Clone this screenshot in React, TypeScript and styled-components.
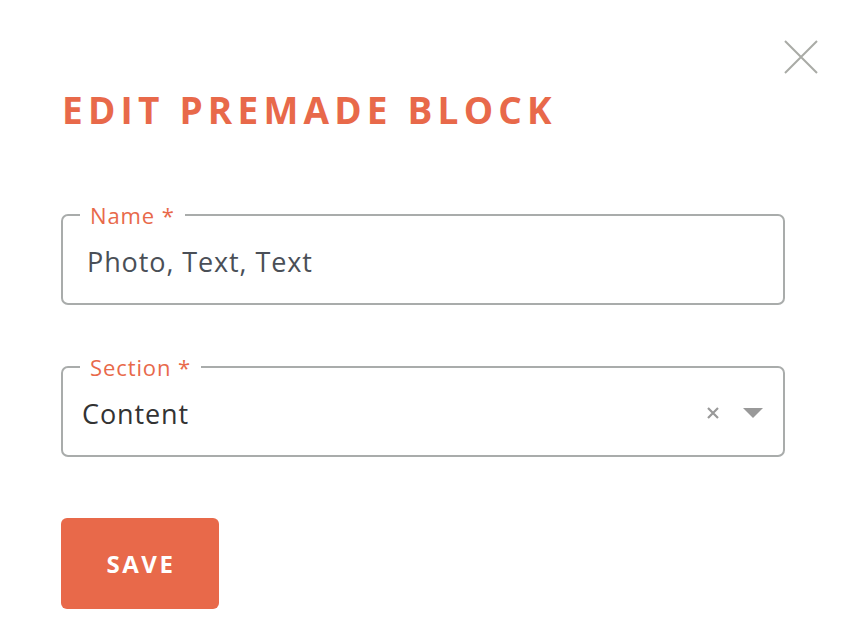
import React from 'react';
import styled, { createGlobalStyle } from 'styled-components';

const GlobalStyle = createGlobalStyle`
  html, body {
    margin: 0;
    padding: 0;
    background: #fff;
    font-family: 'Open Sans', 'Liberation Sans', sans-serif;
  }
`;

const Dialog = styled.div`
  position: relative;
  width: 854px;
  height: 638px;
  box-sizing: border-box;
  padding: 88px 69px 0 61px;
  background: #fff;
`;

const CloseButton = styled.button`
  position: absolute;
  top: 40px;
  right: 36px;
  width: 34px;
  height: 34px;
  padding: 0;
  border: none;
  background: none;
  cursor: pointer;
`;

const Title = styled.h2`
  margin: 0 0 0 1px;
  font-size: 37px;
  line-height: 44px;
  font-weight: 700;
  letter-spacing: 5.2px;
  color: #e8694a;
  text-transform: uppercase;
`;

const Form = styled.form`
  display: flex;
  flex-direction: column;
  gap: 50px;
  margin-top: 71px;
`;

const Field = styled.fieldset`
  margin: 0;
  padding: 0;
  min-width: 0;
  height: 102px;
  box-sizing: border-box;
  border: 2px solid #a9acab;
  border-radius: 7px;
`;

const Legend = styled.legend`
  margin-left: 17px;
  padding: 0 10px;
  font-size: 22px;
  line-height: 24px;
  letter-spacing: 0.9px;
  color: #e8694a;
`;

const ValueRow = styled.div<{ $inset: number }>`
  display: flex;
  align-items: center;
  height: 74px;
  padding: 0 20px 0 ${(p) => p.$inset}px;
`;

const Value = styled.span<{ $tone: string }>`
  flex: 1;
  font-size: 27px;
  letter-spacing: 0.9px;
  color: ${(p) => p.$tone};
  margin-top: -6px;
`;

const Indicators = styled.div`
  display: flex;
  align-items: center;
  gap: 24px;
  margin-top: -6px;
`;

const SaveButton = styled.button`
  align-self: flex-start;
  width: 158px;
  height: 91px;
  margin-top: 11px;
  border: none;
  border-radius: 6px;
  background: #e8694a;
  color: #fff;
  font-family: inherit;
  font-size: 24px;
  font-weight: 700;
  letter-spacing: 2.6px;
  padding: 0 0 0 2px;
  cursor: pointer;
`;

export default function App() {
  return (
    <>
      <GlobalStyle />
      <Dialog>
        <CloseButton aria-label="Close">
          <svg width="34" height="34" viewBox="0 0 34 34">
            <path d="M1 1 L33 33 M33 1 L1 33" stroke="#a9aba6" strokeWidth="2" fill="none" />
          </svg>
        </CloseButton>
        <Title>Edit Premade Block</Title>
        <Form onSubmit={(e) => e.preventDefault()}>
          <Field>
            <Legend>Name *</Legend>
            <ValueRow $inset={24}>
              <Value $tone="#4a4f57">Photo, Text, Text</Value>
            </ValueRow>
          </Field>
          <Field>
            <Legend>Section *</Legend>
            <ValueRow $inset={19}>
              <Value $tone="#333333">Content</Value>
              <Indicators>
                <svg width="12" height="12" viewBox="0 0 12 12">
                  <path d="M1 1 L11 11 M11 1 L1 11" stroke="#999" strokeWidth="2.2" fill="none" />
                </svg>
                <svg width="20" height="10" viewBox="0 0 20 10">
                  <path d="M0 0 H20 L10 10 Z" fill="#999" />
                </svg>
              </Indicators>
            </ValueRow>
          </Field>
          <SaveButton type="submit">SAVE</SaveButton>
        </Form>
      </Dialog>
    </>
  );
}
